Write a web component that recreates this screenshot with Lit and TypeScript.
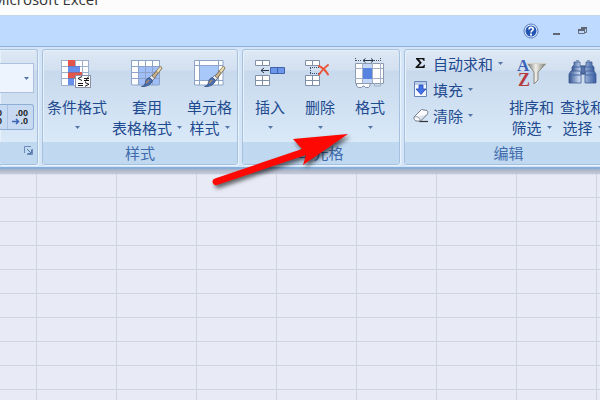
import { LitElement, html, svg, css, nothing } from "lit";
import { customElement } from "lit/decorators.js";

const caret = html`<svg class="caret" width="5" height="3" viewBox="0 0 5 3" aria-hidden="true">
  <path d="M0 0h5L2.5 3z" fill="#5577a8" />
</svg>`;

const brush = svg`
  <path d="M29.500 8.500L20 19l2.500 2.500L31 10z" fill="#c9b38c" stroke="#5d5240" stroke-width=".8" />
  <path d="M29.500 8L25 13l2.500 2L31 10z" fill="#e9dcb8" stroke="#786747" stroke-width=".6" />
  <path d="M20.500 17.500l3 2.800-2 2.200-3.300-2.800z" fill="#e7e9ee" stroke="#60666f" stroke-width=".7" />
  <path d="M18.500 19.500l3 2.800c-1 4.500-6 6.700-11 6.200 3-1 3.500-2 4-4.500.4-2.300 2-4 4-4.500z" fill="#496fae" stroke="#294878" stroke-width=".7" />
  <path d="M15 25l3-3" stroke="#b98b62" stroke-width="1.500" />`;

const big = (body: unknown) => html`<svg class="pic" width="32" height="32" viewBox="0 0 32 32" aria-hidden="true">${body}</svg>`;
const small = (body: unknown) => html`<svg width="16" height="16" viewBox="0 0 16 16" aria-hidden="true">${body}</svg>`;

const icons = {
  conditional: big(svg`
    <rect x="0" y="2" width="28" height="25" fill="#fff" />
    <path d="M.5 2v25.500H28M7.500 2v25M14.500 2v25M21.500 2v25M27.500 2v25M1 2.500h27M1 8.500h27M1 14.500h27M1 20.500h27" fill="none" stroke="#9fb0cc" />
    <path d="M7 2h7v6H7zM7 14h14v6H7z" fill="#e5564a" />
    <path d="M7 8h12v6H7zM7 20h6v7H7z" fill="#6690ea" />
    <path d="M7 8.500h12M7 14.500h12M7 20.500h8" stroke="#5f6fae" stroke-width=".6" />
    <rect x="14.500" y="17.500" width="15" height="12" fill="#fff" stroke="#8a93a6" />
    <path d="M21 18.500l-4 2 4 2M17 25.500h5M17 27.500h5M23 20.500h5M23 22.500h5M27.500 18.500l-3 5M24 24.500l4 1.800-4 2" fill="none" stroke="#161616" />`),
  table: big(svg`
    <rect x="1" y="2" width="27" height="25" fill="#fff" />
    <path d="M8 8h20v19H8z" fill="#a0bff8" />
    <path d="M.5 2v25M7.500 2v25M14.500 2v25M21.500 2v25M28.500 2v25M1 2.500h27M1 8.500h27M1 14.500h27M1 20.500h27M1 27h27" fill="none" stroke="#8ea3c8" />
    ${brush}`),
  style: big(svg`
    <rect x="1" y="2" width="28" height="25" fill="#fff" />
    <path d="M6 8h18v14H6z" fill="#a8c8fa" />
    <path d="M.5 2.500H29V27H.5zM5.500 2v25M24.500 2v25M1 7.500h28M1 22.500h28" fill="none" stroke="#8ea3c8" />
    ${brush}`),
  insert: big(svg`
    <path d="M1.500 2.500h14v5h-14zM1.500 17.500h14v10h-14z" fill="#fff" stroke="#8090a8" />
    <path d="M8.500 2v6M8.500 18v10M1 22.500h15" stroke="#8090a8" />
    <path d="M16.500 9.500h14v6h-14z" fill="#6c96ea" stroke="#4062a8" />
    <path d="M23.500 10v5" stroke="#4062a8" />
    <path d="M7 12.500h8M10 10l-3 2.500L10 15" fill="none" stroke="#26364f" />`),
  remove: big(svg`
    <path d="M1.500 2.500h14v5h-14zM1.500 17.500h14v10h-14z" fill="#fff" stroke="#8090a8" />
    <path d="M8.500 2v6M8.500 18v10M1 22.500h15" stroke="#8090a8" />
    <path d="M6 9.500h12M6 15.500h11M6.500 10v5" fill="none" stroke="#334a70" stroke-dasharray="1 1" />
    <path d="M15 8c4 2 7 5 9 8.500M24 7c-3 2-6 5-9 9.500" fill="none" stroke="#e9563a" stroke-width="2" stroke-linecap="round" />`),
  format: big(svg`
    <path d="M1.500 0v4M26.500 0v4" stroke="#445167" stroke-dasharray="1 1" />
    <path d="M2 2.500h6M20 2.500h6" stroke="#445167" stroke-dasharray="1 1" />
    <path d="M9 2.500h10M11.500 .5L9 2.500l2.500 2M17 .5l2.500 2-2.500 2" fill="none" stroke="#26364f" />
    <path d="M2.500 24v4l2 1.500h3l1.500-1.500h1l1.500 1.500h3l1.500-1.500v-4z" fill="#fff" stroke="#8090a8" />
    <path d="M1.500 5.500h28v20h-28z" fill="#fff" stroke="#8c9bb2" />
    <path d="M9 6h9v19H9z" fill="#c4d6f5" />
    <path d="M8.500 5v20M18.500 5v20M26.500 5v23h-6v-3M1 10.500h28M1 20.500h28" fill="none" stroke="#a3b0c6" />
    <path d="M9 10h9v11H9z" fill="#5583df" />`),
  sort: big(svg`
    <defs><linearGradient id="fun"><stop offset="0" stop-color="#777" /><stop offset=".45" stop-color="#f0efe9" /><stop offset="1" stop-color="#77756e" /></linearGradient></defs>
    <text x="1" y="13" font-family="Liberation Serif, serif" font-weight="700" font-size="17" fill="#3a63b8">A</text>
    <text x="2" y="28" font-family="Liberation Serif, serif" font-weight="700" font-size="18" fill="#b53b41">Z</text>
    <path d="M11.500 5.500h18.500L22 14v8l-4 4V14z" fill="url(#fun)" stroke="#8d8b84" />
    <path d="M11 5.500h19" stroke="#d3d0c7" />`),
  find: big(svg`
    <defs><linearGradient id="tube"><stop offset="0" stop-color="#35558f" /><stop offset=".4" stop-color="#cddcf6" /><stop offset="1" stop-color="#355a9e" /></linearGradient></defs>
    <path d="M12 8h8v8h-8z" fill="#5573aa" stroke="#2c4572" />
    <path d="M7 4h6v3l1 2v6H5V9l2-2zM19 4h6v3l2 2v6h-9V9l1-2z" fill="url(#tube)" stroke="#3d5b92" stroke-width=".8" />
    <path d="M9 2h3v2H9zM20 2h3v2h-3z" fill="#8298bd" />
    <path d="M4 13h9l1 3v9H2v-9zM19 13h8l2 3v9H18v-9z" fill="url(#tube)" stroke="#3d5b92" stroke-width=".8" />
    <path d="M2 17h12M18 17h11M5 9h9M18 9h9" stroke="#4366a4" />`),
  sum: small(svg`<path d="M3 3h8.500v3h-1C10.300 5 10 4.300 8.500 4.300H6L8.800 7.800 5.500 11.500h3c1.500 0 2-.4 2.500-1.700h1L11.500 13H2.500v-1l4-4L3 4z" fill="#111" />`),
  fill: small(svg`
    <path d="M1.500 .5h12v15h-12z" fill="#f5f9ff" stroke="#6484b8" />
    <path d="M2 1h11v3H2z" fill="#b9cdeb" />
    <path d="M6 4h4v4h3l-5 5.500L3 8h3z" fill="#416fe8" stroke="#2449ad" stroke-width=".8" />`),
  erase: small(svg`
    <path d="M6 14.500h9" stroke="#333" stroke-width="1.200" />
    <path d="M1 10l7.500-7.500 5.500 1c1 1 1 2.500 0 4L7.500 14H3c-1.500-.5-2.500-2.500-2-4z" fill="#fdfdff" stroke="#737d8f" />
    <path d="M1.500 10c3-.8 5 .5 6 4L14 7.500" fill="#dfe3ec" stroke="#737d8f" stroke-width=".8" />`),
};

interface Command { icon: unknown; top: string; bottom?: string }

@customElement("ribbon-command")
class RibbonCommand extends LitElement {
  static properties = { command: { attribute: false } };
  declare command: Command;
  static styles = css`
    :host { display: block; flex: none; }
    button {
      display: flex; flex-direction: column; align-items: center;
      width: 100%; padding: 0; border: 0; background: none;
      font: inherit; color: inherit; line-height: 21px; white-space: nowrap;
    }
    .pic { display: block; margin-bottom: 6px; }
    .line { display: flex; align-items: center; gap: 5px; height: 21px; }
  `;
  render() {
    const { icon, top, bottom } = this.command;
    return html`<button>
      ${icon}<span class="line">${top}</span>
      <span class="line">${bottom ? html`<span>${bottom}</span>` : nothing}${caret}</span>
    </button>`;
  }
}

@customElement("ribbon-group")
class RibbonGroup extends LitElement {
  static properties = { label: {} };
  declare label: string;
  static styles = css`
    :host {
      display: flex; flex-direction: column; flex: none; box-sizing: border-box;
      border: 1px solid #a6c1de; border-radius: 3px;
      background: linear-gradient(#dee8f5 0, #d3e0f0 20px, #c8d9ed 21px, #d9e9f8 92px);
      box-shadow: 1px 1px 0 #e9f4fd, inset 1px 1px 0 #e8f0f9;
    }
    .body { display: flex; flex: 1; min-height: 92px; box-sizing: border-box; }
    .foot {
      height: 22px; line-height: 22px; text-align: center; color: #3f6cac;
      background: #c0d8f0; border-radius: 0 0 2px 2px; position: relative;
    }
    .corner { position: absolute; right: 4px; top: 0; }
  `;
  render() {
    return html`<div class="body"><slot></slot></div>
      <div class="foot">${this.label}<span class="corner"><slot name="corner"></slot></span></div>`;
  }
}

@customElement("app-root")
class AppRoot extends LitElement {
  static styles = css`
    :host {
      display: flex; flex-direction: column; min-height: 100vh; position: relative; overflow: hidden;
      font: 15px "Noto Sans CJK SC", sans-serif; color: #1e4a8f; background: #e8ebf5;
    }
    .title { height: 16px; overflow: hidden; background: #fcfcfc; border-bottom: 1px solid #c5d7f0; box-sizing: border-box; }
    .title span {
      display: flex; justify-content: flex-end; width: 98px; margin-top: -11px;
      font: 15px/20px "Open Sans", sans-serif; color: #333; white-space: nowrap;
    }
    .tabs {
      display: flex; justify-content: flex-end; align-items: center; gap: 10px;
      height: 30px; padding-right: 9px; background: #bedaff;
    }
    .tabs button, .launch { padding: 0; border: 0; background: none; display: block; height: 16px; }
    .ribbon {
      display: flex; gap: 4px; padding: 2px 0 2px; overflow: hidden;
      background: #d4e5f7; border-top: 1px solid #8bb0dc; border-bottom: 2px solid #86afdc;
    }
    .number { width: 38px; border-left: 0; border-radius: 0 3px 3px 0; }
    .stack { display: flex; flex-direction: column; gap: 11px; width: 100%; padding: 13px 3px 0 0; }
    .pick { display: flex; position: relative; }
    .pick svg { position: absolute; right: 5px; top: 14px; }
    select {
      appearance: none; width: 100%; height: 30px; box-sizing: border-box; margin: 0;
      border: 1px solid #abc1de; border-left: 0; border-radius: 0; background: #edf4fd; color: inherit;
    }
    .digits { display: flex; height: 26px; box-sizing: border-box; border: 1px solid #8faed5; border-left: 0; border-radius: 0 3px 3px 0; background: #c7daf1; }
    .digits button {
      display: flex; flex-direction: column; align-items: flex-end; justify-content: center;
      padding: 0 5px 0 0; border: 0; background: none; color: #222;
      font: bold 9px/8px "Liberation Sans", sans-serif; overflow: hidden;
    }
    .digits .less { width: 7px; }
    .digits .more { flex: 1; border-left: 1px solid #a9c2e2; }
    .more span { display: flex; align-items: center; }
    .row { display: flex; flex: 1; padding-top: 8px; }
    .wide { gap: 5px; padding-left: 4px; padding-right: 5px; }
    .cells { padding-left: 2px; padding-right: 4px; }
    .cells ribbon-command { width: 50px; }
    .edit { gap: 6px; padding-left: 8px; padding-right: 7px; }
    .list { display: flex; flex-direction: column; margin-top: -8px; }
    .list button {
      display: flex; align-items: center; height: 26px; padding: 0; gap: 4px;
      border: 0; background: none; font: inherit; color: inherit;
    }
    .list .caret { margin-left: 1px; }
    .sheet {
      flex: 1; min-height: 230px;
      background:
        linear-gradient(#a7b0c3, #c0c6d6 4px, #e8ebf500 6px),
        repeating-linear-gradient(90deg, #d0d3e2 0 1px, transparent 1px 80px) 36px 0,
        repeating-linear-gradient(#d0d3e2 0 1px, transparent 1px 24px) 0 28px,
        #e8ebf5;
      background-size: auto, 800px 100%, 100% 240px, auto;
    }
    .pointer { position: absolute; left: 205px; top: 125px; pointer-events: none; filter: drop-shadow(2px 3px 2px #0009); }
  `;

  render() {
    const cmd = (icon: unknown, top: string, bottom?: string) =>
      html`<ribbon-command .command=${{ icon, top, bottom }}></ribbon-command>`;
    return html`
      <header class="title"><span>Microsoft Excel</span></header>
      <nav class="tabs">
        <button aria-label="帮助"><svg width="16" height="16" viewBox="0 0 16 16">
          <circle cx="8" cy="8" r="7" fill="#e9f2ff" stroke="#507ac1" />
          <circle cx="8" cy="8" r="5.500" fill="#2355b4" />
          <path d="M6 6.500c0-3 4.200-2.700 4.200-.3C10.200 7.700 8 7.500 8 9.500" fill="none" stroke="#fff" stroke-width="1.600" />
          <path d="M7 10.500h2v2H7z" fill="#fff" /></svg></button>
        <button aria-label="最小化"><svg width="16" height="16" viewBox="0 0 16 16"><path d="M4 10h7v2H4z" fill="#5e6673" /></svg></button>
        <button aria-label="还原"><svg width="16" height="16" viewBox="0 0 16 16">
          <path d="M6.500 7V4.500h5v5H10M3.500 6.500h6v4h-6z" fill="none" stroke="#667080" />
          <path d="M6 4h6v2H6zM3 6h7v2H3z" fill="#5e6673" /></svg></button>
      </nav>
      <main class="ribbon">
        <ribbon-group class="number" label="">
          <div class="stack">
            <div class="pick"><select aria-label="数字格式"></select>${caret}</div>
            <div class="digits">
              <button class="less" aria-label="增加小数位数"><span>.0</span><span>.00</span></button>
              <button class="more" aria-label="减少小数位数"><span>.00</span><span>
                <svg width="8" height="7" viewBox="0 0 8 7"><path d="M0 3.500h6M4 1l2.500 2.500L4 6" fill="none" stroke="#3c63b5" stroke-width="1.500" /></svg>.0</span></button>
            </div>
          </div>
          <button slot="corner" class="launch" aria-label="数字设置"><svg width="9" height="16" viewBox="0 0 9 16">
            <path d="M.5 11V4.500H7M8.500 7v5.500H3" fill="none" stroke="#6c8cb8" />
            <path d="M3 7l4 4M7.500 7.500v4h-4" fill="none" stroke="#5577a8" /></svg></button>
        </ribbon-group>
        <ribbon-group label="样式">
          <div class="row wide">
            ${cmd(icons.conditional, "条件格式")}
            ${cmd(icons.table, "套用", "表格格式")}
            ${cmd(icons.style, "单元格", "样式")}
          </div>
        </ribbon-group>
        <ribbon-group label="单元格">
          <div class="row cells">
            ${cmd(icons.insert, "插入")}
            ${cmd(icons.remove, "删除")}
            ${cmd(icons.format, "格式")}
          </div>
        </ribbon-group>
        <ribbon-group label="编辑">
          <div class="row edit">
            <div class="list">
              <button>${icons.sum}<span>自动求和</span>${caret}</button>
              <button>${icons.fill}<span>填充</span>${caret}</button>
              <button>${icons.erase}<span>清除</span>${caret}</button>
            </div>
            ${cmd(icons.sort, "排序和", "筛选")}
            ${cmd(icons.find, "查找和", "选择")}
          </div>
        </ribbon-group>
      </main>
      <section class="sheet"></section>
      <svg class="pointer" width="150" height="65" viewBox="205 125 150 65" aria-hidden="true">
        <path d="M348 134L293 139L302 149L215 178.500A3.300 3.300 0 0 0 217 185L306 155L303 165Z" fill="#fd0802" />
      </svg>
    `;
  }
}
